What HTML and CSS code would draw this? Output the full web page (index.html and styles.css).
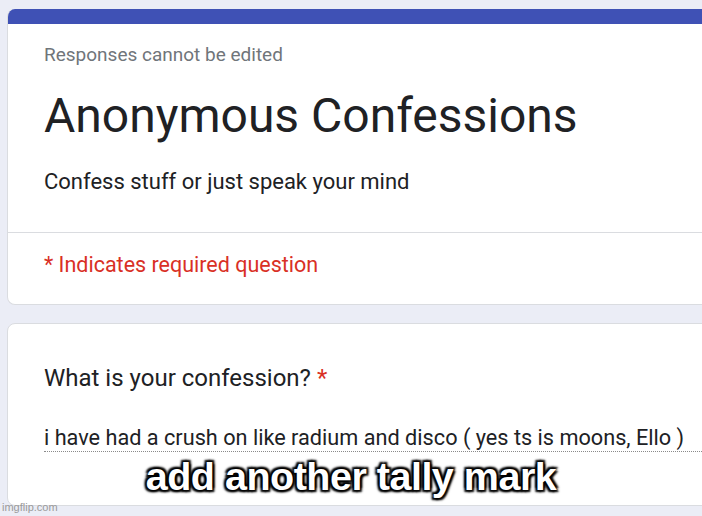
FILE: index.html
```html
<!DOCTYPE html>
<html lang="en">
<head>
    <meta charset="UTF-8">
    <meta name="viewport" content="width=device-width, initial-scale=1.0">
    <title>Anonymous Confessions</title>
    <link rel="stylesheet" href="styles.css">
</head>
<body>
    <div class="page">
        <div class="card header-card">
            <div class="top-bar"></div>
            <div class="header">
                <p class="note">Responses cannot be edited</p>
                <h1 class="title">Anonymous Confessions</h1>
                <p class="desc">Confess stuff or just speak your mind</p>
            </div>
            <div class="required">* Indicates required question</div>
        </div>

        <div class="card question-card">
            <div class="question">What is your confession? <span class="star">*</span></div>
            <div class="answer">i have had a crush on like radium and disco ( yes ts is moons, Ello )</div>
        </div>
    </div>

    <!-- meme caption over the screenshot -->
    <div class="caption">add another tally mark</div>
    <div class="watermark">imgflip.com</div>
</body>
</html>
```

FILE: styles.css
```css
html, body {
    margin: 0;
    padding: 0;
}
body {
    background-color: #ebedf6;
    font-family: Roboto, 'Noto Sans', sans-serif;
    width: 702px;
    height: 516px;
    overflow: hidden;
    position: relative;
}
.page {
    padding: 9px 0 0 7px;
}
.card {
    width: 720px;
    background-color: white;
    border: 1px solid #dadce0;
    border-radius: 8px;
    overflow: hidden;
}
.header-card {
    border-top: none;
}
.top-bar {
    height: 15px;
    background-color: #3f51b5;
}
.header {
    padding: 18px 36px 35px;
    border-bottom: 1px solid #dadce0;
}
.note {
    margin: 0;
    font-size: 19px;
    line-height: 26px;
    color: #70757a;
}
.title {
    margin: 20px 0 0;
    font-size: 48px;
    line-height: 56px;
    font-weight: 400;
    color: #202124;
}
.desc {
    margin: 23px 0 0;
    font-size: 22px;
    line-height: 30px;
    color: #202124;
}
.required {
    padding: 18px 36px 25px;
    font-size: 21.5px;
    line-height: 28px;
    color: #d93025;
}
.question-card {
    margin-top: 18px;
    height: 183px;
    padding: 39px 0 0 36px;
    box-sizing: border-box;
}
.question {
    font-size: 24px;
    line-height: 30px;
    color: #202124;
}
.star {
    color: #d93025;
}
.answer {
    margin-top: 32px;
    font-size: 21.7px;
    line-height: 26px;
    color: #202124;
    border-bottom: 1px dotted #8a8a8a;
}
.caption {
    position: absolute;
    left: 0;
    top: 452px;
    width: 702px;
    text-align: center;
    font-family: 'Liberation Sans', Arial, sans-serif;
    font-weight: bold;
    font-size: 39.5px;
    line-height: 48px;
    color: white;
    letter-spacing: -0.5px;
    text-shadow: 2px 2px 2px #000, -2px -2px 2px #000, 2px -2px 2px #000, -2px 2px 2px #000, 0 0 4px #000;
}
.watermark {
    position: absolute;
    left: 2px;
    top: 501px;
    font-family: 'Liberation Sans', Arial, sans-serif;
    font-size: 11px;
    color: #9a9a9a;
}
```
